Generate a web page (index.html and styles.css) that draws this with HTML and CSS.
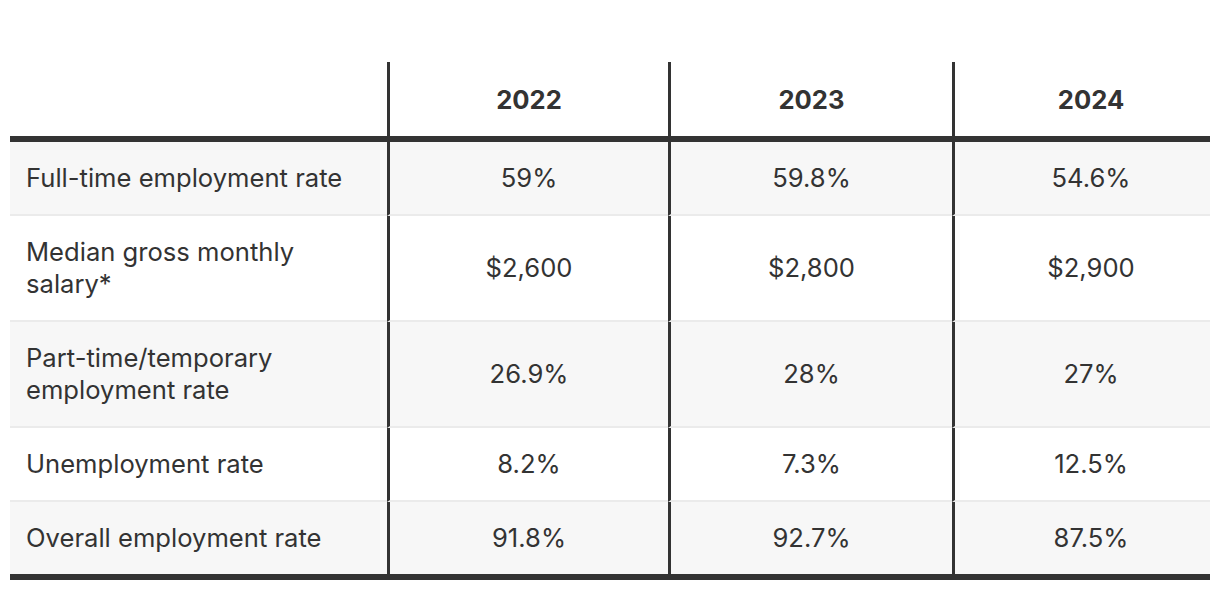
FILE: index.html
```html
<!DOCTYPE html>
<html lang="en">
<head>
<meta charset="utf-8">
<title>Employment statistics</title>
<link rel="stylesheet" href="styles.css">
</head>
<body>
<div class="table-wrap">
  <table class="stats">
    <colgroup>
      <col class="c-label">
      <col class="c-2022">
      <col class="c-2023">
      <col class="c-2024">
    </colgroup>
    <thead>
      <tr>
        <th class="label"></th>
        <th>2022</th>
        <th>2023</th>
        <th>2024</th>
      </tr>
    </thead>
    <tbody>
      <tr>
        <td class="label">Full-time employment rate</td>
        <td>59%</td>
        <td>59.8%</td>
        <td>54.6%</td>
      </tr>
      <tr>
        <td class="label">Median gross monthly salary*</td>
        <td>$2,600</td>
        <td>$2,800</td>
        <td>$2,900</td>
      </tr>
      <tr>
        <td class="label">Part-time/temporary employment rate</td>
        <td>26.9%</td>
        <td>28%</td>
        <td>27%</td>
      </tr>
      <tr>
        <td class="label">Unemployment rate</td>
        <td>8.2%</td>
        <td>7.3%</td>
        <td>12.5%</td>
      </tr>
      <tr>
        <td class="label">Overall employment rate</td>
        <td>91.8%</td>
        <td>92.7%</td>
        <td>87.5%</td>
      </tr>
    </tbody>
  </table>
</div>
</body>
</html>
```

FILE: styles.css
```css
html, body {
  margin: 0;
  background: #ffffff;
}

body {
  padding: 62px 10px 0;
  font-family: Inter, Roboto, "Liberation Sans", sans-serif;
  color: #333333;
}

.table-wrap {
  width: 1200px;
  overflow: hidden;
}

.stats {
  width: 1217px;
  table-layout: fixed;
  border-collapse: separate;
  border-spacing: 0;
  font-size: 25.6px;
  line-height: 32px;
}

.c-label { width: 377px; }
.c-2022 { width: 281px; }
.c-2023 { width: 284px; }
.c-2024 { width: 275px; }

.stats th,
.stats td {
  text-align: center;
  vertical-align: middle;
  border-left: 3px solid #333333;
}

.stats th.label,
.stats td.label {
  border-left: 0;
  text-align: left;
}

.stats th {
  padding: 22px 10px 20px;
  font-weight: 700;
  border-bottom: 6px solid #333333;
}

.stats td {
  padding: 20px 10px;
  border-bottom: 2px solid #ebebeb;
}

.stats td.label {
  padding-left: 16px;
}

.stats tbody tr:nth-child(odd) td {
  background: #f7f7f7;
}

.stats tbody tr:last-child td {
  border-bottom: 6px solid #333333;
}
```
